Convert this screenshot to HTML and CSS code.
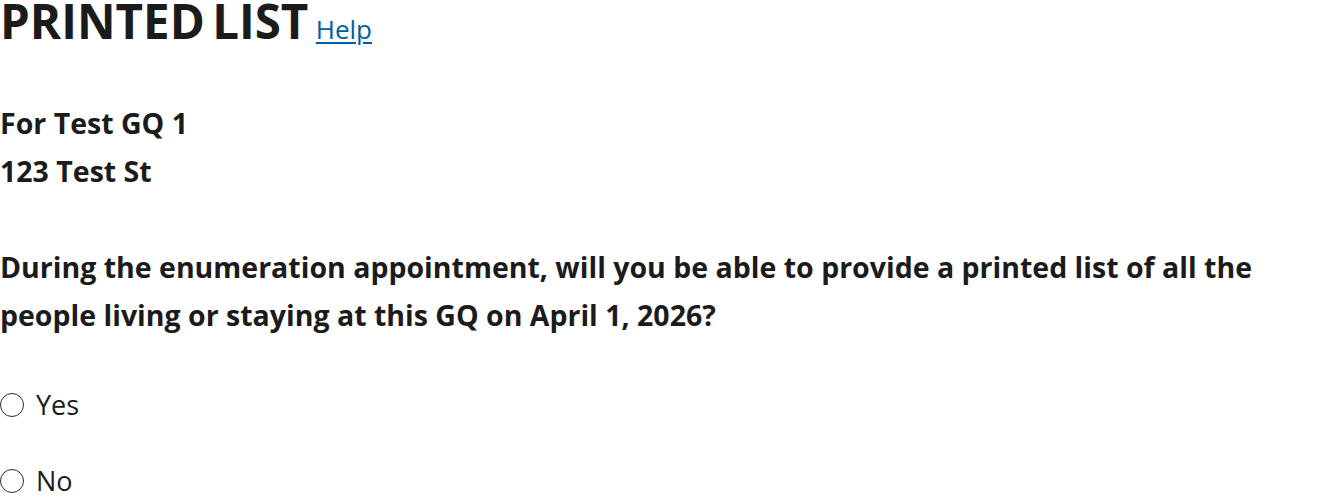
FILE: index.html
```html
<!DOCTYPE html>
<html lang="en">
<head>
<meta charset="utf-8">
<link rel="stylesheet" href="styles.css">
<title>Printed List</title>
</head>
<body>
<main class="page">
  <h1 class="title">PRINTED LIST <a class="help" href="#">Help</a></h1>
  <p class="gq">For Test GQ 1<br>123 Test St</p>
  <fieldset class="question">
    <legend class="prompt">During the enumeration appointment, will you be able to provide a printed list of all the people living or staying at this GQ on April 1, 2026?</legend>
    <div class="options">
      <label class="option"><input type="radio" name="list" class="radio"><span>Yes</span></label>
      <label class="option"><input type="radio" name="list" class="radio"><span>No</span></label>
    </div>
  </fieldset>
</main>
</body>
</html>
```

FILE: styles.css
```css
html, body {
  margin: 0;
  padding: 0;
  background: #fff;
}
body {
  font-family: "Open Sans", "Noto Sans", sans-serif;
  color: #1b1b1b;
  font-size: 28.5px;
}
.page {
  display: flex;
  flex-direction: column;
}
.title {
  margin: 0;
  font-size: 47.5px;
  font-weight: 700;
  line-height: 42px;
  word-spacing: -5px;
}
.help {
  font-size: 26px;
  font-weight: 400;
  color: #005ea2;
  word-spacing: 0;
  text-underline-offset: 3px;
}
.gq {
  margin: 49px 0 0;
  font-weight: 700;
  line-height: 48px;
}
.question {
  margin: 48px 0 0;
  padding: 0;
  border: 0;
  min-width: 0;
}
.prompt {
  padding: 0;
  font-weight: 700;
  line-height: 48px;
}
.options {
  display: flex;
  flex-direction: column;
  gap: 28px;
  margin-top: 42px;
}
.option {
  display: flex;
  align-items: center;
  gap: 12px;
  line-height: 48px;
  font-size: 27px;
}
.radio {
  appearance: none;
  -webkit-appearance: none;
  box-sizing: border-box;
  margin: 0;
  width: 24px;
  height: 24px;
  border: 1.25px solid #2b2b2b;
  border-radius: 50%;
  background: #fff;
  flex: none;
}
```
